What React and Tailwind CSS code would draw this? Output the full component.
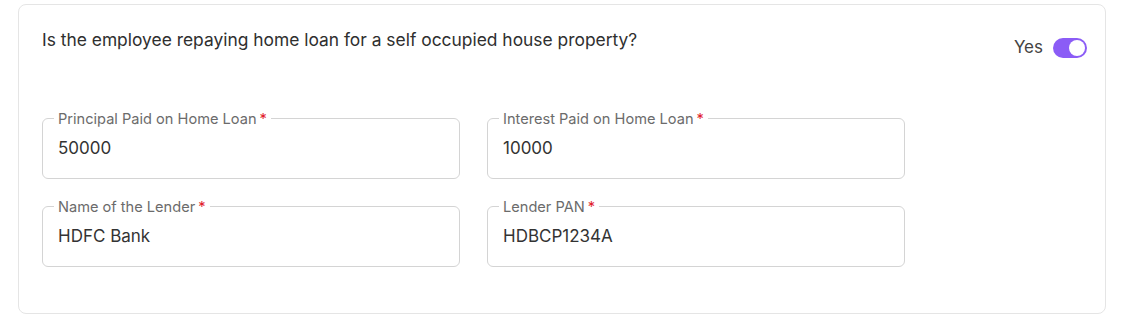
import { useState } from 'react'

const fields = [
  { label: 'Principal Paid on Home Loan', value: '50000' },
  { label: 'Interest Paid on Home Loan', value: '10000' },
  { label: 'Name of the Lender', value: 'HDFC Bank' },
  { label: 'Lender PAN', value: 'HDBCP1234A' },
]

function OutlinedField({ label, value }) {
  return (
    <fieldset className="relative h-[69px] border border-[#d4d4d4] rounded-md pl-[15px] pr-3 -mt-[8px]">
      <legend className="ml-[-4px] px-[4px] text-[14.6px] leading-[16px] text-[#6b6b6b]">
        <span className="relative top-[1px]">
          {label}
          <span className="text-[#e11d2e] ml-[3px]">*</span>
        </span>
      </legend>
      <div className="pt-[12px] text-[17px] leading-[20px] text-[#333]">{value}</div>
    </fieldset>
  )
}

export default function App() {
  const [on, setOn] = useState(true)
  return (
    <div className="w-[1126px] h-[317px] bg-white pl-[18px] pt-[4px] pr-[20px] font-['Inter',sans-serif]">
      <div className="h-[310px] border border-[#e5e5e5] rounded-lg pl-[23px] pr-[18px] pt-[23px]">
        <div className="flex justify-between">
          <p className="text-[17.4px] leading-[24px] text-[#2f2f2f]">
            Is the employee repaying home loan for a self occupied house property?
          </p>
          <div className="flex items-center gap-[10px] mt-[10px] h-[20px]">
            <span className="text-[17px] text-[#444]">Yes</span>
            <button
              type="button"
              onClick={() => setOn(o => !o)}
              className={`w-[34px] h-[20px] rounded-full flex items-center px-[2px] ${on ? 'bg-[#8b5cf6] justify-end' : 'bg-gray-300 justify-start'}`}
            >
              <span className="w-[16px] h-[16px] rounded-full bg-white block" />
            </button>
          </div>
        </div>
        <div className="grid grid-cols-[418px_418px] gap-x-[27px] gap-y-[27px] mt-[60px]">
          {fields.map(f => (
            <OutlinedField key={f.label} {...f} />
          ))}
        </div>
      </div>
    </div>
  )
}
